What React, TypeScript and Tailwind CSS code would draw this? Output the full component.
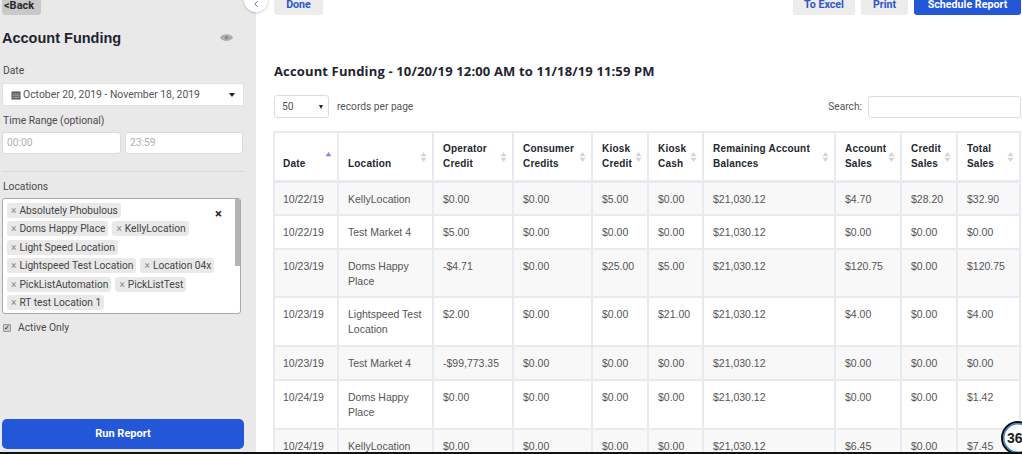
import { ChevronLeft } from "lucide-react";

const sans = "font-['Roboto',sans-serif]";
const arial = "font-['Liberation_Sans',Arial,sans-serif]";

const locations = [
  ["Absolutely Phobulous"],
  ["Doms Happy Place", "KellyLocation"],
  ["Light Speed Location"],
  ["Lightspeed Test Location", "Location 04x"],
  ["PickListAutomation", "PickListTest"],
  ["RT test Location 1"],
];

const columns = [
  { w: "w-[64px]", label: ["Date"], sorted: true },
  { w: "w-[95px]", label: ["Location"] },
  { w: "w-[80px]", label: ["Operator", "Credit"] },
  { w: "w-[79px]", label: ["Consumer", "Credits"] },
  { w: "w-[56px]", label: ["Kiosk", "Credit"] },
  { w: "w-[55px]", label: ["Kiosk", "Cash"] },
  { w: "w-[132px]", label: ["Remaining Account", "Balances"] },
  { w: "w-[66px]", label: ["Account", "Sales"] },
  { w: "w-[56px]", label: ["Credit", "Sales"] },
  { w: "w-[63px]", label: ["Total", "Sales"] },
];

const rows = [
  { h: "h-[34px]", cells: ["10/22/19", "KellyLocation", "$0.00", "$0.00", "$5.00", "$0.00", "$21,030.12", "$4.70", "$28.20", "$32.90"] },
  { h: "h-[34px]", cells: ["10/22/19", "Test Market 4", "$5.00", "$0.00", "$0.00", "$0.00", "$21,030.12", "$0.00", "$0.00", "$0.00"] },
  { h: "h-[48px]", cells: ["10/23/19", "Doms Happy Place", "-$4.71", "$0.00", "$25.00", "$5.00", "$21,030.12", "$120.75", "$0.00", "$120.75"] },
  { h: "h-[49px]", cells: ["10/23/19", "Lightspeed Test Location", "$2.00", "$0.00", "$0.00", "$21.00", "$21,030.12", "$4.00", "$0.00", "$4.00"] },
  { h: "h-[34px]", cells: ["10/23/19", "Test Market 4", "-$99,773.35", "$0.00", "$0.00", "$0.00", "$21,030.12", "$0.00", "$0.00", "$0.00"] },
  { h: "h-[49px]", cells: ["10/24/19", "Doms Happy Place", "$0.00", "$0.00", "$0.00", "$0.00", "$21,030.12", "$0.00", "$0.00", "$1.42"] },
  { h: "h-[34px]", cells: ["10/24/19", "KellyLocation", "$0.00", "$0.00", "$0.00", "$0.00", "$21,030.12", "$6.45", "$0.00", "$7.45"] },
];

function SortArrows({ active }: { active?: boolean }) {
  return (
    <svg width="7" height="10" viewBox="0 0 7 10" className="absolute right-[5px] top-[19px]">
      <path d="M3.5 0 L6.5 4.2 H0.5 Z" fill={active ? "#8a8ad8" : "#d4d4d4"} />
      {!active && <path d="M3.5 10 L0.5 5.8 H6.5 Z" fill="#d4d4d4" />}
    </svg>
  );
}

function Sidebar() {
  return (
    <aside className={`w-[256px] shrink-0 bg-[#e9e9e9] flex flex-col px-[2px] ${sans}`}>
      <div className="h-[15px] flex">
        <button className={`h-[15px] w-[39px] rounded-b-[3px] bg-[#c9c9c9] text-[#2a2a2a] text-[11px] font-bold pb-[7px] pl-[2px] text-left leading-none ${sans}`}>
          &lt;Back
        </button>
      </div>

      <div className="mt-[13px] flex items-center justify-between pr-[21px]">
        <h1 className={`text-[14.5px] leading-[20px] font-bold text-[#1f2430] ${arial}`}>Account Funding</h1>
        <svg width="13" height="9" viewBox="0 0 13 9" className="mb-[2px]">
          <path d="M0 4.5 C2.5 0 10.5 0 13 4.5 C10.5 9 2.5 9 0 4.5 Z" fill="#ababab" />
          <circle cx="6.5" cy="4.5" r="2.6" fill="#8f8f8f" stroke="#cfcfcf" strokeWidth="0.6" />
        </svg>
      </div>

      <label className="mt-[15px] pl-[1px] text-[10.3px] leading-[15px] text-[#4a4a4a]">Date</label>
      <div className="mt-[5px] h-[23px] w-[242px] bg-white rounded-[3px] border border-[#e2e2e2] flex items-center pl-[8px] pr-[8px] text-[10.4px] text-[#555]">
        <svg width="10" height="10" viewBox="0 0 10 10" className="mr-[2px] shrink-0">
          <path d="M0.5 1.5 H9.5 V9.5 H0.5 Z" fill="#555" />
          <path d="M1.5 4 H8.5 M1.5 5.8 H8.5 M1.5 7.6 H8.5" stroke="#ddd" strokeWidth="0.6" />
        </svg>
        <span className="flex-1 whitespace-nowrap">October 20, 2019 - November 18, 2019</span>
        <span className="w-0 h-0 border-x-[3.5px] border-x-transparent border-t-[4px] border-t-[#222]" />
      </div>

      <label className="mt-[7px] pl-[1px] text-[10.3px] leading-[15px] text-[#4a4a4a]">Time Range (optional)</label>
      <div className="mt-[4px] flex gap-[4px]">
        <div className="h-[22px] w-[119px] bg-white rounded-[3px] border border-[#dcdcdc] pl-[4px] text-[10.3px] leading-[20px] text-[#b0b0b0]">00:00</div>
        <div className="h-[22px] w-[118px] bg-white rounded-[3px] border border-[#dcdcdc] pl-[4px] text-[10.3px] leading-[20px] text-[#b0b0b0]">23:59</div>
      </div>

      <div className="mt-[17px] h-px w-[242px] bg-[#d8d8d8]" />

      <label className="mt-[7px] pl-[1px] text-[10.3px] leading-[15px] text-[#4a4a4a]">Locations</label>
      <div className="relative mt-[4px] h-[116px] w-[239px] bg-white rounded-[3px] border border-[#a9a9a9] overflow-hidden pl-[4px] pt-[4px]">
        <div className="flex flex-col gap-[3.4px]">
          {locations.map((line, i) => (
            <div key={i} className="flex gap-[4px]">
              {line.map((name) => (
                <span key={name} className="h-[15px] rounded-[3px] bg-[#e9e9e9] pl-[4px] pr-[3px] text-[10.2px] leading-[15px] text-[#444] whitespace-nowrap">
                  <span className="text-[#8a8a8a] mr-[3px]">×</span>
                  {name}
                </span>
              ))}
            </div>
          ))}
        </div>
        <span className="absolute left-[212px] top-[7px] text-[13px] leading-[15px] font-bold text-[#222]">×</span>
        <div className="absolute right-0 top-0 h-[67px] w-[5px] bg-[#b4b4b4]" />
      </div>

      <label className="mt-[6px] flex items-center gap-[7px] pl-[1px] text-[10.3px] leading-[15px] text-[#4a4a4a]">
        <span className="w-[8px] h-[8px] rounded-[1px] bg-[#cfcfcf] border border-[#999] text-[7px] leading-[6px] text-[#222] text-center">✓</span>
        Active Only
      </label>

      <button className={`mt-[84px] h-[30px] w-[242px] rounded-[5px] bg-[#2456d8] text-white text-[11px] font-bold pt-[1px] ${sans}`}>Run Report</button>
    </aside>
  );
}

function TopButton({ label, w, primary }: { label: string; w: string; primary?: boolean }) {
  return (
    <button
      className={`h-[15px] ${w} rounded-b-[3px] text-[10.7px] font-bold leading-none pb-[7px] ${sans} ${
        primary ? "bg-[#2456d8] text-white" : "bg-[#ececec] text-[#2f55c8]"
      }`}
    >
      {label}
    </button>
  );
}

function ReportTable() {
  return (
    <table className={`mt-[13px] -ml-[1px] table-fixed border-collapse w-[746px] ${arial}`}>
      <thead>
        <tr className="h-[49px]">
          {columns.map((c, i) => (
            <th
              key={c.label[0] + c.w}
              className={`${c.w} ${i === 0 ? "pl-[8px]" : "pl-[9px]"} relative border-2 border-b-[3px] border-[#e8eaf0] pb-[9px] align-bottom text-left text-[10px] leading-[15px] font-bold tracking-[0.2px] text-[#23272f]`}
            >
              {c.label.map((l) => (
                <div key={l}>{l}</div>
              ))}
              <SortArrows active={c.sorted} />
            </th>
          ))}
        </tr>
      </thead>
      <tbody>
        {rows.map((r, i) => (
          <tr key={i} className={`${r.h} ${i % 2 === 0 ? "bg-[#f8f8f8]" : "bg-white"}`}>
            {r.cells.map((c, j) => (
              <td key={j} className={`${j === 0 ? "pl-[8px]" : "pl-[9px]"} border-2 border-[#e8eaf0] pr-[6px] pt-[9px] align-top text-[10.5px] leading-[15px] text-[#555]`}>
                {c}
              </td>
            ))}
          </tr>
        ))}
      </tbody>
    </table>
  );
}

export default function App() {
  return (
    <div className="relative h-[454px] w-[1022px] overflow-hidden bg-white flex">
      <Sidebar />

      <main className={`flex-1 pl-[18px] ${sans}`}>
        <div className="flex items-start">
          <TopButton label="Done" w="w-[49px]" />
          <div className="ml-auto flex gap-[6px] mr-[1px]">
            <TopButton label="To Excel" w="w-[62px]" />
            <TopButton label="Print" w="w-[47px]" />
            <TopButton label="Schedule Report" w="w-[107px]" primary />
          </div>
        </div>

        <h2 className="mt-[47px] font-['Open_Sans',sans-serif] text-[13px] leading-[18px] font-bold tracking-[0.14px] text-[#1f2430]">
          Account Funding - 10/20/19 12:00 AM to 11/18/19 11:59 PM
        </h2>

        <div className="mt-[15px] flex items-center">
          <div className="h-[23px] w-[55px] rounded-[3px] border border-[#dcdcdc] flex items-center justify-between pl-[7px] pr-[5px] text-[10.3px] text-[#555]">
            50
            <span className="w-0 h-0 border-x-[2.5px] border-x-transparent border-t-[4px] border-t-[#222]" />
          </div>
          <span className="ml-[8px] text-[10.2px] text-[#555]">records per page</span>
          <span className="ml-auto text-[10.2px] text-[#555]">Search:</span>
          <div className="ml-[6px] mr-[1px] h-[22px] w-[153px] rounded-[3px] border border-[#dcdcdc]" />
        </div>

        <ReportTable />
      </main>

      {/* collapse toggle */}
      <div className="absolute left-[244px] top-[-12px] h-[24px] w-[24px] rounded-full bg-white shadow-[0_1px_3px_rgba(0,0,0,0.2)] flex items-center justify-center">
        <ChevronLeft size={10} className="text-[#2456d8] mt-[8px]" />
      </div>

      {/* help badge */}
      <div className="absolute left-[1001px] top-[421px] h-[34px] w-[34px] rounded-full border-[2px] border-[#111] bg-white flex items-center pl-[4px] shadow-[inset_0_0_0_1.5px_#3a8ad8]">
        <span className={`text-[14px] font-bold text-[#222] ${arial}`}>36</span>
      </div>

      <div className="absolute bottom-0 left-0 h-[2px] w-full bg-[#111]" />
    </div>
  );
}
